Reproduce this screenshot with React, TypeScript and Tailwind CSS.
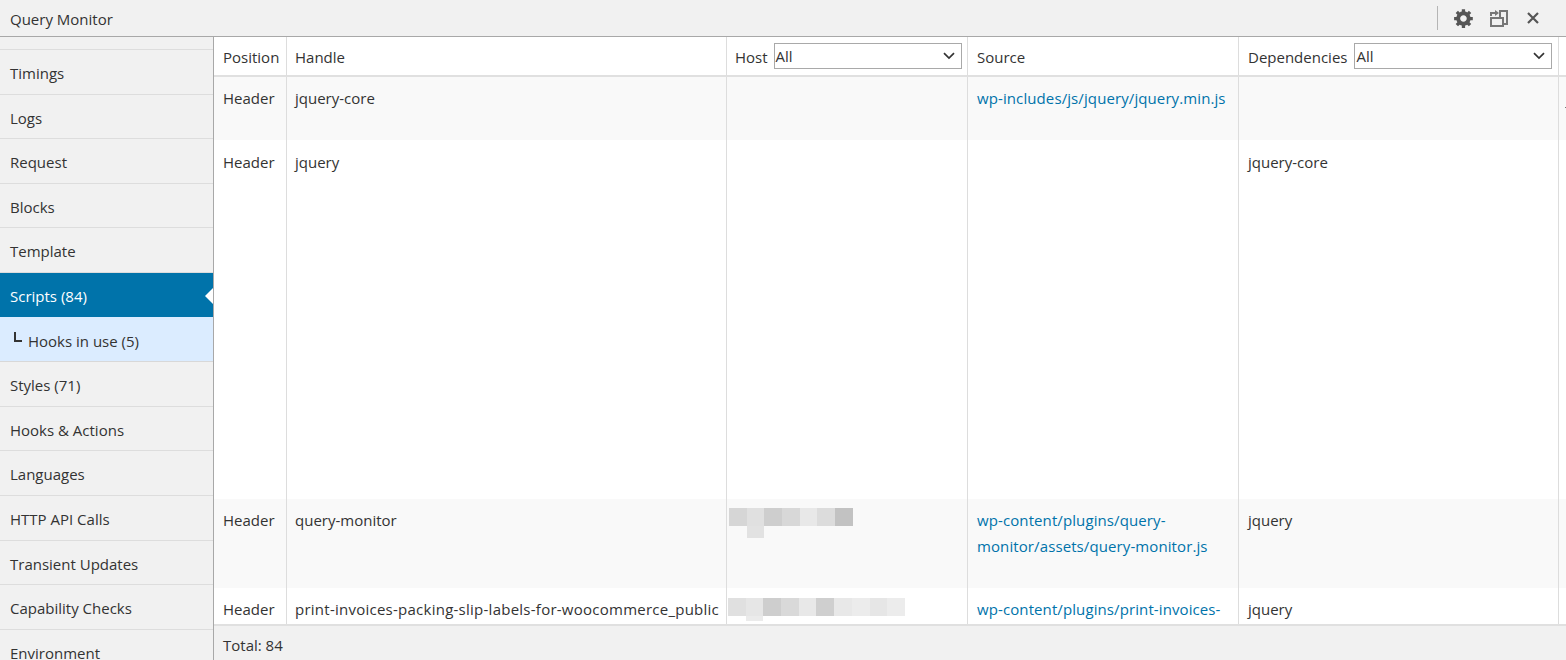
const font = "font-['Open_Sans','Noto_Sans',sans-serif]";

const navRows = [
  { label: "Timings" },
  { label: "Logs" },
  { label: "Request" },
  { label: "Blocks" },
  { label: "Template" },
  { label: "Scripts (84)", active: true },
  { label: "Hooks in use (5)", sub: true },
  { label: "Styles (71)" },
  { label: "Hooks & Actions" },
  { label: "Languages" },
  { label: "HTTP API Calls" },
  { label: "Transient Updates" },
  { label: "Capability Checks" },
  { label: "Environment" },
];

function NavItem({ label, active, sub }: { label: string; active?: boolean; sub?: boolean }) {
  if (active) {
    return (
      <div className="relative flex h-[44px] shrink-0 items-center bg-[#0073aa] pl-[10px] pt-[2px] text-white">
        {label}
        <span className="absolute right-0 top-[15px] h-0 w-0 border-y-[8px] border-r-[8px] border-y-transparent border-r-white" />
      </div>
    );
  }
  if (sub) {
    return (
      <div className="flex h-[45.2px] shrink-0 items-center border-b border-[#d8d8d8] bg-[#dbecff] pl-[14px] pt-[4px]">
        <span className="mr-[6px] mb-[9px] h-[10px] w-[8px] border-b-2 border-l-2 border-[#333]" />
        {label}
      </div>
    );
  }
  return (
    <div className="flex h-[44.6px] shrink-0 items-center border-b border-[#dddddd] pl-[10px] pt-[3px]">{label}</div>
  );
}

function Select({ width }: { width: string }) {
  return (
    <span className={`relative mb-[3px] flex h-[26px] shrink-0 items-center border border-[#a9a9a9] bg-white pl-[1px] pt-[2px] ${width}`}>
      All
      <svg className="absolute right-[6px] top-[8px]" width="12" height="8" viewBox="0 0 12 8" fill="none">
        <path d="M1 1.2 6 6l5-4.8" stroke="#333" strokeWidth="1.7" />
      </svg>
    </span>
  );
}

function Pixels({ cells, below, belowHeight }: { cells: string[]; below: string; belowHeight: string }) {
  return (
    <div className="flex flex-col">
      <div className="flex">
        {cells.map((c, i) => (
          <span key={i} className="h-[18px] w-[17.7px]" style={{ backgroundColor: c }} />
        ))}
      </div>
      <span className={`ml-[17.7px] w-[17.7px] ${belowHeight}`} style={{ backgroundColor: below }} />
    </div>
  );
}

const link = "text-[#0073aa] tracking-[0.1px]";
const cell = "border-r border-[#dddddd] align-top px-2 pt-[8px] leading-[26px]";
const cellWide = "border-r border-[#dddddd] align-top pl-[9px] pr-2 pt-[8px] leading-[26px]";
const cellTall = "border-r border-[#dddddd] align-top px-2 pt-[9px] leading-[26px]";
const cellTallWide = "border-r border-[#dddddd] align-top pl-[9px] pr-2 pt-[9px] leading-[26px]";
const hcell = "h-[40px] border-r border-[#dddddd] border-b-2 border-b-[#e0e0e0] px-2 pt-[2px] text-left font-normal align-middle";
const hcellWide = "h-[40px] border-r border-[#dddddd] border-b-2 border-b-[#e0e0e0] pl-[9px] pr-2 pt-[2px] text-left font-normal align-middle";

export default function App() {
  return (
    <div className={`flex h-[660px] w-[1566px] flex-col overflow-hidden bg-[#f1f1f1] text-[15px] text-[#333] ${font}`}>
      <header className="flex h-[37px] shrink-0 items-center justify-between border-b border-[#a8a8a8] pl-[10px] pr-[27px]">
        <span className="pt-[2px]">Query Monitor</span>
        <div className="flex items-center">
          <span className="mr-[15px] h-[24px] w-px bg-[#b5b5b5]" />
          <svg width="22" height="22" viewBox="0 0 20 20" className="mr-[14px]" fill="#555">
            <path d="M18 12h-2.18c-.17.7-.44 1.35-.81 1.93l1.54 1.54-2.1 2.1-1.54-1.54c-.58.36-1.23.63-1.91.79V19H8v-2.18c-.68-.16-1.33-.43-1.91-.79l-1.54 1.54-2.12-2.12 1.54-1.54c-.36-.58-.63-1.23-.79-1.91H1V9.03h2.17c.16-.7.44-1.35.8-1.94L2.43 5.55l2.1-2.1 1.54 1.54c.58-.37 1.24-.64 1.93-.81V2h3v2.18c.68.16 1.33.43 1.91.79l1.54-1.54 2.12 2.12-1.54 1.54c.36.59.64 1.24.8 1.94H18V12zm-8.5 1.5c1.66 0 3-1.34 3-3s-1.34-3-3-3-3 1.34-3 3 1.34 3 3 3z" />
          </svg>
          <svg width="20" height="20" viewBox="0 0 20 20" className="mr-[18px]" fill="none" stroke="#777" strokeWidth="2">
            <path d="M11 10V3h7v13h-3" />
            <rect x="2" y="10" width="12" height="8" />
            <path d="M2 8V5h4" />
            <path d="M6 2v6l4-3z" fill="#777" stroke="none" />
          </svg>
          <svg width="12" height="12" viewBox="0 0 12 12" stroke="#555" strokeWidth="2.2" fill="none">
            <path d="M1 1l10 10M11 1 1 11" />
          </svg>
        </div>
      </header>

      <div className="flex min-h-0 flex-1">
        <nav className="flex w-[214px] shrink-0 flex-col overflow-hidden border-r border-[#a8a8a8]">
          <div className="h-[13px] shrink-0 border-b border-[#dddddd]" />
          {navRows.map((r) => (
            <NavItem key={r.label} {...r} />
          ))}
        </nav>

        <main className="flex min-w-0 flex-1 flex-col">
          <div className="min-h-0 flex-1 overflow-hidden bg-white">
            <table className="w-[1352px] table-fixed border-separate border-spacing-0">
              <colgroup>
                <col className="w-[73px]" />
                <col className="w-[440px]" />
                <col className="w-[241px]" />
                <col className="w-[271px]" />
                <col className="w-[320px]" />
                <col className="w-[7px]" />
              </colgroup>
              <thead>
                <tr>
                  <th className={hcellWide}>Position</th>
                  <th className={hcell}>Handle</th>
                  <th className={hcell}>
                    <div className="flex items-center gap-[6px]">Host <Select width="w-[188px]" /></div>
                  </th>
                  <th className={hcellWide}>Source</th>
                  <th className={hcellWide}>
                    <div className="flex items-center gap-[7px]">Dependencies <Select width="w-[198px]" /></div>
                  </th>
                  <th className="border-b-2 border-b-[#e0e0e0]" />
                </tr>
              </thead>
              <tbody>
                <tr className="h-[63px] bg-[#f9f9f9]">
                  <td className={cellWide}>Header</td>
                  <td className={cell}>jquery-core</td>
                  <td className={cell} />
                  <td className={cellWide}><span className={link}>wp-includes/js/jquery/jquery.min.js</span></td>
                  <td className={cellWide} />
                  <td className="align-top">
                    <div className="ml-[6px] mt-[30px] h-px w-px bg-[#777]" />
                  </td>
                </tr>
                <tr className="h-[359px]">
                  <td className={cellTallWide}>Header</td>
                  <td className={cellTall}>jquery</td>
                  <td className={cellTall} />
                  <td className={cellTallWide} />
                  <td className={cellTallWide}>jquery-core</td>
                  <td />
                </tr>
                <tr className="h-[89px] bg-[#f9f9f9]">
                  <td className={cellWide}>Header</td>
                  <td className={cell}>query-monitor</td>
                  <td className="border-r border-[#dddddd] pl-[2px] pt-[9px] align-top">
                    <Pixels
                      cells={["#d6d6d6", "#e0e0e0", "#cecece", "#d8d8d8", "#e8e8e8", "#dcdcdc", "#c2c2c2"]}
                      below="#e2e2e2"
                      belowHeight="h-[12px]"
                    />
                  </td>
                  <td className={cellWide}><span className={link}>wp-content/plugins/query-monitor/assets/query-monitor.js</span></td>
                  <td className={cellWide}>jquery</td>
                  <td />
                </tr>
                <tr className="h-[60px]">
                  <td className={cellWide}>Header</td>
                  <td className={`${cell} whitespace-nowrap tracking-[0.25px]`}>print-invoices-packing-slip-labels-for-woocommerce_public</td>
                  <td className="border-r border-[#dddddd] pl-[1px] pt-[10px] align-top">
                    <Pixels
                      cells={["#e0e0e0", "#e6e6e6", "#cecece", "#d9d9d9", "#e8e8e8", "#cfcfcf", "#e8e8e8", "#ececec", "#e6e6e6", "#ececec"]}
                      below="#ebebeb"
                      belowHeight="h-[5px]"
                    />
                  </td>
                  <td className={cellWide}><span className={link}>wp-content/plugins/print-invoices-</span></td>
                  <td className={cellWide}>jquery</td>
                  <td />
                </tr>
              </tbody>
            </table>
          </div>
          <footer className="flex h-[36px] shrink-0 items-center border-t-2 border-[#e0e0e0] pl-[9px] pt-[5px]">Total: 84</footer>
        </main>
      </div>
    </div>
  );
}
